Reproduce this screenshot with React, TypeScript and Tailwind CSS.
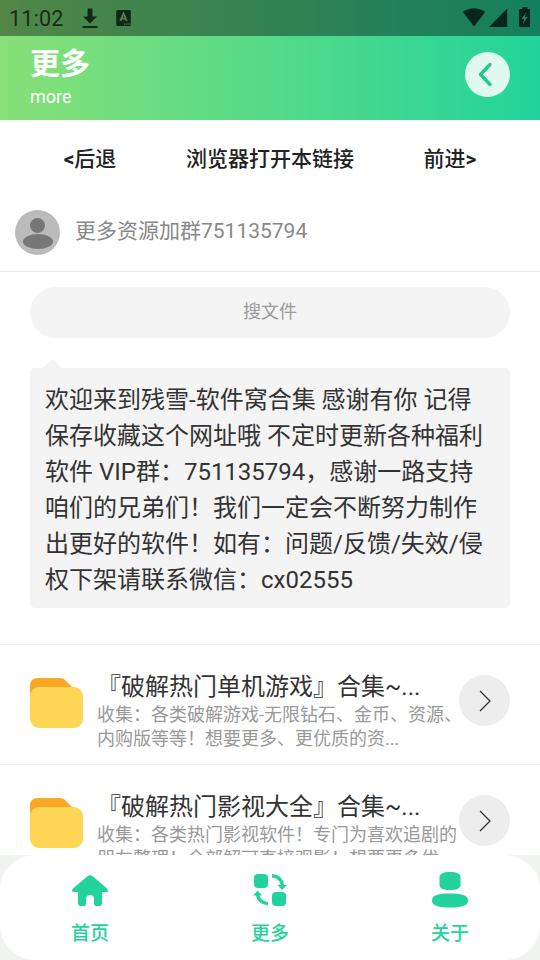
import type { ReactNode } from "react";

const folders = [
  {
    title: "『破解热门单机游戏』合集~...",
    lines: ["收集：各类破解游戏-无限钻石、金币、资源、", "内购版等等！想要更多、更优质的资..."],
  },
  {
    title: "『破解热门影视大全』合集~...",
    lines: ["收集：各类热门影视软件！专门为喜欢追剧的", "朋友整理！全部解可直接观影！想要更多优..."],
  },
];

const notice = [
  "欢迎来到残雪-软件窝合集 感谢有你 记得",
  "保存收藏这个网址哦 不定时更新各种福利",
  "软件 VIP群：751135794，感谢一路支持",
  "咱们的兄弟们！我们一定会不断努力制作",
  "出更好的软件！如有：问题/反馈/失效/侵",
  "权下架请联系微信：cx02555",
];

function StatusBar() {
  return (
    <div className="flex h-9 items-center bg-black/40 text-black/70">
      <span className="ml-[9px] w-[73px] pt-[1px] text-[21.5px] leading-9 tracking-[0.2px]">11:02</span>
      <svg width="16" height="22" viewBox="0 0 16 22" fill="currentColor">
        <path d="M5.500 1.500h5v8H15L8 16.500 1 9.500h4.500zM.5 19h15v2H.5z" />
      </svg>
      <svg className="ml-[18px]" width="16" height="18" viewBox="0 0 16 18">
        <rect x=".2" y="1" width="14.600" height="16" rx="1.500" fill="currentColor" />
        <path d="M4.300 12 7.500 4.500 10.700 12M5.400 9.700h4.200" stroke="#4a8a4e" strokeWidth="1.800" fill="none" />
        <path d="M8 15.200h1.200M10.300 15.200h1.200M12.600 15.200h1.200" stroke="#4a8a4e" strokeWidth="1.200" />
      </svg>
      <svg className="ml-auto mr-[8px]" width="70" height="24" viewBox="0 0 70 24" fill="currentColor">
        <path d="M.8 6Q12 -1.500 23.200 6L12 20.500z" />
        <path d="M45.200 2.500v18.500H27z" />
        <path d="M60.500 1h5v2h1.500q1 0 1 1v16q0 1-1 1H58q-1 0-1-1V4q0-1 1-1h2.500z" />
        <path d="M64.500 6 59.500 13h2.700L61 18l4.500-7h-2.700z" fill="#208560" />
      </svg>
    </div>
  );
}

function Folder() {
  return (
    <svg className="mt-[33px] shrink-0" width="53" height="50" viewBox="0 0 53 50">
      <path d="M0 18V8Q0 0 8 0H30Q33 0 35 2L42 9V18z" fill="#f9a825" />
      <rect y="9" width="53" height="41" rx="9" fill="#ffd555" />
    </svg>
  );
}

function Tab({ label, children }: { label: string; children: ReactNode }) {
  return (
    <div className="flex flex-1 flex-col items-center pt-[15px]">
      <svg width="40" height="40" viewBox="0 0 40 40" fill="#22d49b">
        {children}
      </svg>
      <span className="mt-[10px] text-[19px] font-medium leading-[28px]">{label}</span>
    </div>
  );
}

export default function App() {
  return (
    <div lang="zh-CN" className="flex h-[960px] w-[540px] flex-col overflow-hidden bg-white font-[Roboto,'Noto_Sans_CJK_SC',sans-serif] text-[#333]">
      <header className="h-[120px] shrink-0 bg-[linear-gradient(90deg,#88e077,#22d49b)]">
        <StatusBar />
        <div className="flex h-[84px] justify-between pl-[30px] pr-[30px] text-white">
          <div className="pt-[8px]">
            <h1 className="text-[30px] font-bold leading-[40px]">更多</h1>
            <p className="mt-[1px] text-[18px] leading-[24px]">more</p>
          </div>
          <div className="mt-[16px] flex size-[45px] items-center justify-center rounded-full bg-white/85">
            <svg width="24" height="28" viewBox="0 0 24 28">
              <path d="M14 3.500 4.500 13.500 14 23.500" stroke="#22c985" strokeWidth="3.300" strokeLinecap="round" strokeLinejoin="round" fill="none" />
            </svg>
          </div>
        </div>
      </header>

      <main className="min-h-0 flex-1 overflow-hidden">
        <nav className="flex h-[75px] text-center text-[21px] font-medium leading-[79px] text-[#222]">
          <span className="flex-1"><b>&lt;</b>后退</span>
          <span className="flex-1">浏览器打开本链接</span>
          <span className="flex-1">前进<b>&gt;</b></span>
        </nav>
        <div className="flex h-[77px] border-b border-[#ebebeb] pl-[15px] pt-[15px]">
          <svg width="45" height="45" viewBox="0 0 45 45">
            <circle cx="22.500" cy="22.500" r="22.500" fill="#bbb" />
            <circle cx="22.500" cy="15.500" r="7.500" fill="#777" />
            <ellipse cx="23" cy="31.500" rx="15" ry="7.500" fill="#777" />
          </svg>
          <span className="ml-[15px] text-[21px] leading-[43px] text-[#888]">更多资源加群751135794</span>
        </div>
        <div className="mx-[30px] mt-[15px] h-[51px] rounded-full bg-[#f4f4f4] text-center text-[18px] leading-[50px] text-[#999]">
          搜文件
        </div>
        <div className="mx-[30px] mt-[21px]">
          <svg className="ml-[13px] block" width="19" height="9" viewBox="0 0 19 9">
            <path d="M0 9 9.500 0 19 9z" fill="#f4f4f4" />
          </svg>
          <div className="h-[240px] rounded-[5px] bg-[#f4f4f4] pl-[15px] pt-[14px] text-[24px] leading-[36px]">
            {notice.map((line) => (
              <p key={line} className="whitespace-nowrap">{line}</p>
            ))}
          </div>
        </div>
        <ul className="mt-[36px]">
          {folders.map((item) => (
            <li key={item.title} className="flex h-[120px] border-t border-[#f1f1f1] pl-[30px]">
              <Folder />
              <div className="ml-[14px] w-[362px] shrink-0 whitespace-nowrap pt-[24px]">
                <h2 className="text-[24px] leading-[36px]">{item.title}</h2>
                <div className="-mt-[2px] text-[18px] leading-[24px] text-[#999]">
                  {item.lines.map((line) => (
                    <p key={line}>{line}</p>
                  ))}
                </div>
              </div>
              <div className="mt-[30px] flex size-[51px] shrink-0 items-center justify-center rounded-full bg-[#ededed]">
                <svg width="14" height="24" viewBox="0 0 14 24">
                  <path d="M2 2 12 12 2 22" stroke="#333" strokeWidth="1.300" fill="none" />
                </svg>
              </div>
            </li>
          ))}
        </ul>
      </main>

      <footer className="h-[105px] shrink-0 bg-[#f1f3f1]">
        <div className="flex h-full rounded-[35px] bg-white text-[#22d49b]">
          <Tab label="首页">
            <path d="M17 6.500Q20 4 23 6.500L37 18.500Q39.500 22 36 22H32V33Q32 36 29 36H26Q24 36 24 34V29Q24 25 20 25T16 29V34Q16 36 14 36H11Q8 36 8 33V22H4Q.5 22 3 18.500z" />
          </Tab>
          <Tab label="更多">
            <rect x="4" y="4" width="14" height="14" rx="4" />
            <rect x="22" y="22" width="14" height="14" rx="4" />
            <path d="M22 4Q33 5 34 15H37L32 20 27.500 15H30.500Q30 8.500 22 7.500zM18 35.500Q7 34 6 25.500H3L7.500 20.500 12 25.500H9.500Q11 31 18 32z" />
          </Tab>
          <Tab label="关于">
            <path d="M20 2C27 2 30.500 4 30.500 7V15C30.500 18.500 27 20 20 20S9.500 18.500 9.500 15V7C9.500 4 13 2 20 2z" />
            <path d="M20 23.500C31 23.500 38 25 38 30.500S31 37.500 20 37.500 2 36 2 30.500 9 23.500 20 23.500z" />
          </Tab>
        </div>
      </footer>
    </div>
  );
}
